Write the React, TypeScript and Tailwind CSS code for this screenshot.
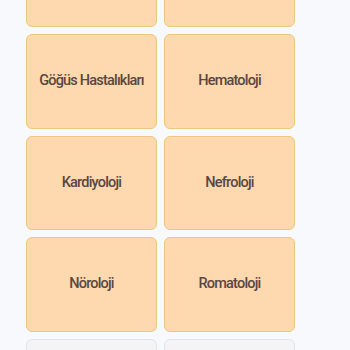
const branches = [
  { name: "Dahiliye", active: true },
  { name: "Endokrinoloji", active: true },
  { name: "Göğüs Hastalıkları", active: true },
  { name: "Hematoloji", active: true },
  { name: "Kardiyoloji", active: true },
  { name: "Nefroloji", active: true },
  { name: "Nöroloji", active: true },
  { name: "Romatoloji", active: true },
  { name: "Onkoloji", active: false },
  { name: "Gastroenteroloji", active: false },
];

export default function App() {
  return (
    <div className="w-[350px] h-[350px] overflow-hidden bg-[#f8f9fc]" style={{ fontFamily: "Roboto, 'Liberation Sans', sans-serif" }}>
      <div className="grid grid-cols-[131px_131px] auto-rows-[94.5px] gap-x-[7px] gap-y-[7px] pl-[26px] mt-[-67.5px]">
        {branches.map((b) => (
          <button
            key={b.name}
            className={
              b.active
                ? "flex items-center justify-center rounded-md border-[1.5px] border-[#ebc97c] bg-[#fed8ae] text-[14.5px] font-medium tracking-[-0.8px] text-[#584842]"
                : "flex items-center justify-center rounded-md border-[1.5px] border-[#e3e3e8] bg-[#f4f4f6] text-[14.5px] font-medium tracking-[-0.8px] text-[#9a9aa2]"
            }
          >
            {b.name}
          </button>
        ))}
      </div>
    </div>
  );
}
